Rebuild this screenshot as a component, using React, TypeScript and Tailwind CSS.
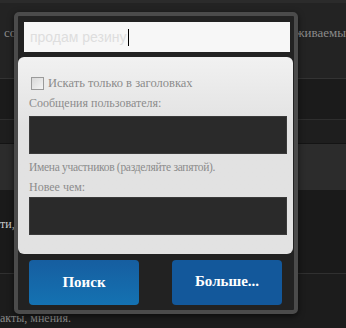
import React from 'react'

const serif = { fontFamily: '"Liberation Serif", "Times New Roman", serif' }

function DarkField() {
  return <div className="h-[38px] w-[258px] border border-[#3a3a3a] bg-[#2a2a2a]" />
}

export default function App() {
  return (
    <div className="relative h-[328px] w-[346px] overflow-hidden bg-[#1c1c1c]">
      {/* page behind the popup */}
      <div className="flex flex-col">
        <div className="h-[3px] bg-[#2b2b2b]" />
        <div className="flex h-[75px] items-start justify-between bg-[#232323] pt-[20px] text-[13px] text-[#8a8a8a] font-['Liberation_Serif',serif]">
          <span className="pl-[4px]">со</span>
          <span className="whitespace-nowrap">живаемы</span>
        </div>
        <div className="h-px bg-[#333]" />
        <div className="h-[40px] bg-[#1b1b1b]" />
        <div className="h-px bg-[#2e2e2e]" />
        <div className="h-[23px] bg-[#1e1e1e]" />
        <div className="h-px bg-[#141414]" />
        <div className="h-[46px] bg-[#2c2c2c]" />
        <div className="h-[83px] bg-[#1a1a1a] pt-[27px] text-[12px] leading-[14px] text-[#cfcfcf] font-['Liberation_Serif',serif]">
          <span>ти,</span>
        </div>
        <div className="h-px bg-[#303030]" />
        <div className="h-[54px] bg-[#1c1c1c] pt-[37px] text-[12px] leading-[14px] text-[#8a8a8a] font-['Liberation_Serif',serif]">
          <span className="whitespace-nowrap">акты, мнения.</span>
        </div>
      </div>

      {/* search popup */}
      <div className="absolute left-[14px] top-[12px] h-[302px] w-[284px] rounded-[5px] border-[4px] border-[#4b4b4b] bg-[#222] shadow-[0_2px_6px_rgba(0,0,0,0.6)]">
        <div className="pl-[6px] pt-[6px]">
          <div className="flex h-[30px] w-[266px] items-center bg-[#f7f7f7] pl-[6px] text-[14px] font-['Liberation_Sans',Arial,sans-serif]">
            <span className="text-[#dedede]">продам резину</span>
            <span className="ml-px h-[17px] w-px bg-black" />
          </div>
        </div>

        <div
          className="mt-[5px] flex h-[197px] w-[275px] flex-col rounded-[6px] bg-gradient-to-b from-[#f1f1f1] to-[#e2e2e2] to-[35%] pl-[11px] pt-[19px] text-[12px] leading-[15px] text-[#8c8c8c]"
          style={serif}
        >
          <label className="flex items-center gap-[4px] pl-[2px]">
            <span className="h-[13px] w-[13px] border border-[#9a9a9a] bg-gradient-to-br from-[#d8d8d8] to-[#f4f4f4]" />
            <span className="text-[12.5px]">Искать только в заголовках</span>
          </label>
          <div className="mt-[5px]">Сообщения пользователя:</div>
          <div className="mt-[5px]">
            <DarkField />
          </div>
          <div className="mt-[6px] text-[11.5px] tracking-[-0.3px]">Имена участников (разделяйте запятой).</div>
          <div className="mt-[5px]">Новее чем:</div>
          <div className="mt-[2px]">
            <DarkField />
          </div>
        </div>

        <div className="mt-[6px] flex gap-[33px] pl-[11px]" style={serif}>
          <button className="h-[45px] w-[110px] rounded-[4px] bg-gradient-to-b from-[#165ea0] to-[#1472b2] text-[15px] font-bold text-white">
            Поиск
          </button>
          <button className="h-[45px] w-[110px] rounded-[4px] bg-[#13589b] pb-[3px] text-[15px] font-bold text-white">
            Больше...
          </button>
        </div>
      </div>
    </div>
  )
}
